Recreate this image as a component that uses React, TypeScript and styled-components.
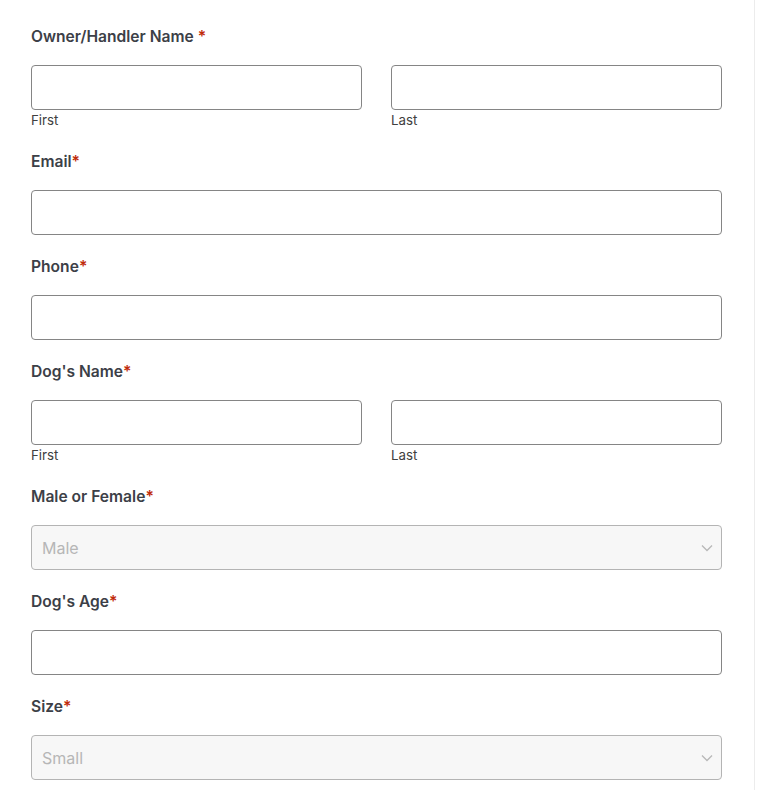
import styled, { createGlobalStyle } from "styled-components";

const GlobalStyle = createGlobalStyle`
  body {
    margin: 0;
    background: #ffffff;
    font-family: Inter, "Noto Sans", sans-serif;
  }
`;

const Page = styled.div`
  box-sizing: border-box;
  width: 755px;
  min-height: 790px;
  padding: 27px 32px 0 31px;
  border-right: 1px solid #ececec;
`;

const Field = styled.div`
  display: flex;
  flex-direction: column;
  margin-bottom: 22px;
`;

const Label = styled.label`
  font-size: 15.6px;
  line-height: 20px;
  font-weight: 600;
  color: #3c4047;
  margin-bottom: 18px;
`;

const Req = styled.span<{ $spaced?: boolean }>`
  color: #c02b0a;
  margin-left: ${(p) => (p.$spaced ? "4px" : "0")};
`;

const Split = styled.div`
  display: grid;
  grid-template-columns: 1fr 1fr;
  column-gap: 29px;
`;

const Col = styled.div`
  display: flex;
  flex-direction: column;
`;

const Input = styled.input`
  box-sizing: border-box;
  width: 100%;
  height: 45px;
  border: 1px solid #858585;
  border-radius: 4px;
  background: #fff;
  padding: 0 10px;
  font-size: 16px;
  font-family: inherit;
`;

const SubLabel = styled.span`
  font-size: 13.3px;
  line-height: 20px;
  color: #404040;
`;

const SelectBox = styled.div`
  box-sizing: border-box;
  width: 100%;
  height: 45px;
  border: 1px solid #b4b4b4;
  border-radius: 4px;
  background: #f7f7f7;
  display: flex;
  align-items: center;
  justify-content: space-between;
  padding: 0 8px 0 10px;
`;

const SelectText = styled.span`
  font-size: 16px;
  color: #b6b6b6;
`;

const Chevron = () => (
  <svg width="12" height="8" viewBox="0 0 12 8" fill="none">
    <path d="M1 1.5l5 5 5-5" stroke="#b8b8b8" strokeWidth="1.3" />
  </svg>
);

const NameField = ({ label, spaced }: { label: string; spaced?: boolean }) => (
  <Field>
    <Label>
      {label}
      <Req $spaced={spaced}>*</Req>
    </Label>
    <Split>
      <Col>
        <Input type="text" />
        <SubLabel>First</SubLabel>
      </Col>
      <Col>
        <Input type="text" />
        <SubLabel>Last</SubLabel>
      </Col>
    </Split>
  </Field>
);

const TextField = ({ label }: { label: string }) => (
  <Field>
    <Label>
      {label}
      <Req>*</Req>
    </Label>
    <Input type="text" />
  </Field>
);

const SelectField = ({ label, value }: { label: string; value: string }) => (
  <Field>
    <Label>
      {label}
      <Req>*</Req>
    </Label>
    <SelectBox>
      <SelectText>{value}</SelectText>
      <Chevron />
    </SelectBox>
  </Field>
);

export default function App() {
  return (
    <>
      <GlobalStyle />
      <Page>
        <NameField label="Owner/Handler Name" spaced />
        <TextField label="Email" />
        <TextField label="Phone" />
        <NameField label="Dog's Name" />
        <SelectField label="Male or Female" value="Male" />
        <TextField label="Dog's Age" />
        <SelectField label="Size" value="Small" />
      </Page>
    </>
  );
}
